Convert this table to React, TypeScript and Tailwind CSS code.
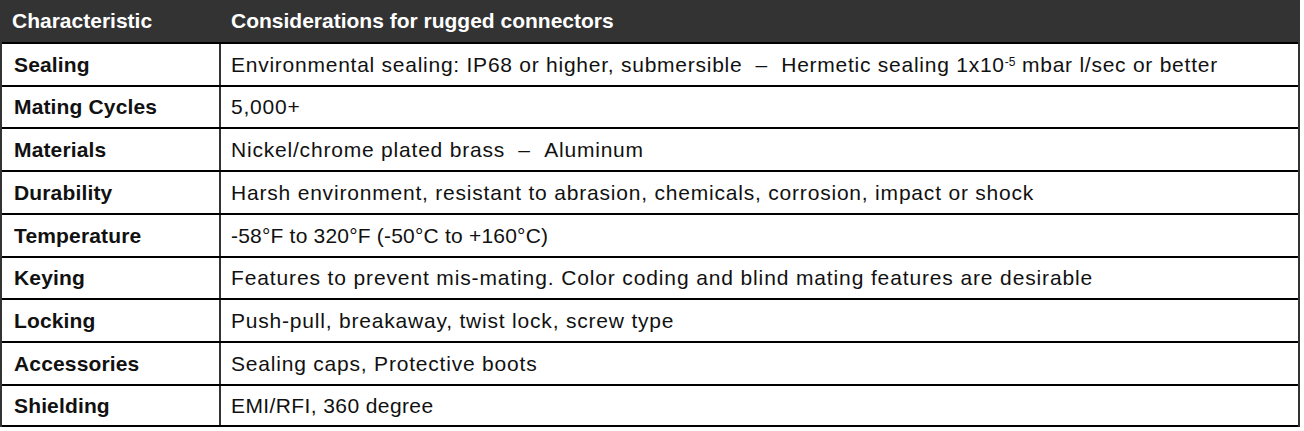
import React from "react";

const rows: { label: string; value: React.ReactNode; h: string; t?: string }[] = [
  {
    label: "Sealing",
    value: (
      <>
        Environmental sealing: IP68 or higher, submersible{"\u00a0\u00a0"}–{"\u00a0\u00a0"}Hermetic sealing 1x10
        <sup className="text-[12px] tracking-normal relative -top-[6px]">-5</sup> mbar l/sec or better
      </>
    ),
    h: "h-[43px]",
    t: "tracking-[0.75px]",
  },
  { label: "Mating Cycles", value: "5,000+", h: "h-[42px]" },
  { label: "Materials", value: <>Nickel/chrome plated brass{"\u00a0\u00a0"}–{"\u00a0\u00a0"}Aluminum</>, h: "h-[43px]" },
  { label: "Durability", value: "Harsh environment, resistant to abrasion, chemicals, corrosion, impact or shock", h: "h-[43px]" },
  { label: "Temperature", value: "-58°F to 320°F (-50°C to +160°C)", h: "h-[43px]", t: "tracking-[0.2px]" },
  { label: "Keying", value: "Features to prevent mis-mating. Color coding and blind mating features are desirable", h: "h-[42px]", t: "tracking-[0.87px]" },
  { label: "Locking", value: "Push-pull, breakaway, twist lock, screw type", h: "h-[43px]" },
  { label: "Accessories", value: "Sealing caps, Protective boots", h: "h-[43px]" },
  { label: "Shielding", value: "EMI/RFI, 360 degree", h: "h-[43px]", t: "tracking-[0.4px]" },
];

export default function App() {
  return (
    <div className="w-[1304px] h-[431px] bg-white" style={{ fontFamily: '"Liberation Sans", Arial, sans-serif' }}>
      <div className="w-[1300px] border-l-2 border-r-2 border-[#333] text-[#111]">
        <div className="flex h-[42px] bg-[#333] text-white font-bold text-[21px]">
          <div className="w-[217px] flex items-center pl-[10px]">Characteristic</div>
          <div className="w-[2px]" />
          <div className="flex-1 flex items-center pl-[10px]">Considerations for rugged connectors</div>
        </div>
        {rows.map((r, i) => (
          <div
            key={r.label}
            className={`flex border-t-2 border-black ${r.h} ${i === rows.length - 1 ? "border-b-2" : ""}`}
          >
            <div className="w-[217px] flex items-center pl-[12px] font-bold text-[21px] tracking-[0.15px]">{r.label}</div>
            <div className="w-[2px] bg-[#333]" />
            <div className={`flex-1 flex items-center pl-[10px] text-[21px] ${r.t ?? "tracking-[0.8px]"}`}>
              <span>{r.value}</span>
            </div>
          </div>
        ))}
      </div>
    </div>
  );
}
